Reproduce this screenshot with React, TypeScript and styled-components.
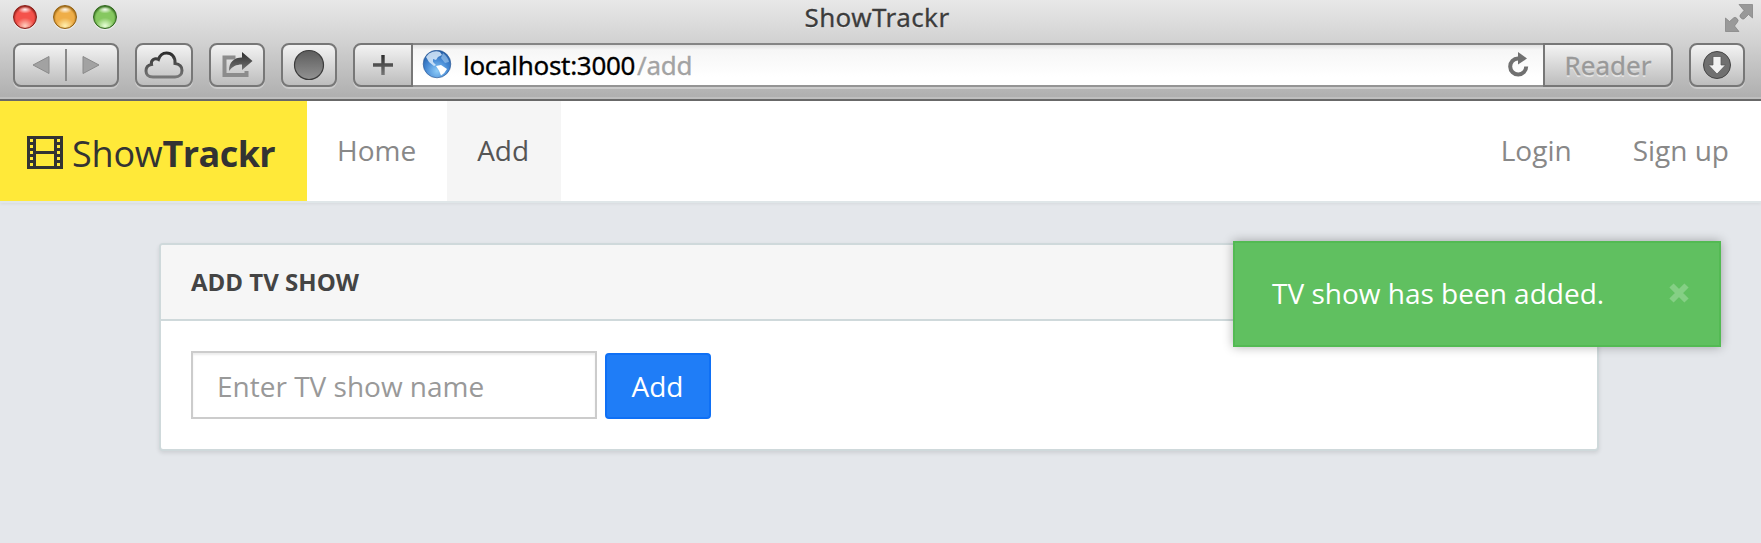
import React from "react";
import styled, { createGlobalStyle } from "styled-components";

const GlobalStyle = createGlobalStyle`
  * { box-sizing: border-box; }
  body { margin: 0; background: #e4e7eb; font-family: "Open Sans", "Noto Sans", sans-serif; font-size: 28px; }
  button, input { font-family: inherit; margin: 0; }
`;

const Window = styled.div`
  position: relative;
  height: 543px;
  overflow: hidden;
  display: flex;
  flex-direction: column;
  background: #e4e7eb;
`;

const Chrome = styled.header`
  height: 101px;
  flex: none;
  background: linear-gradient(#e8e8e8, #d2d2d2 42%, #aeaeae);
  border-bottom: 2px solid #696969;
  box-shadow: inset 0 -2px 0 #bebebe;
`;

const TitleBar = styled.div`
  display: grid;
  grid-template-columns: 1fr auto 1fr;
  height: 43px;
  padding: 0 20px 0 13px;
`;

const Lights = styled.div`
  display: flex;
  gap: 16px;
  padding-top: 5px;
`;

const Light = styled.span<{ $dark: string; $mid: string; $glow: string }>`
  width: 24px;
  height: 24px;
  border-radius: 50%;
  border: 1px solid ${(p) => p.$dark};
  background:
    radial-gradient(ellipse 7px 4px at 50% 16%, rgba(255, 255, 255, 0.9), rgba(255, 255, 255, 0) 100%),
    radial-gradient(ellipse 9px 8px at 50% 90%, ${(p) => p.$glow}, transparent 100%),
    radial-gradient(circle at 50% 55%, ${(p) => p.$mid} 55%, ${(p) => p.$dark} 100%);
  box-shadow: inset 0 1px 2px ${(p) => p.$dark}, 0 1px 0 rgba(255, 255, 255, 0.6);
`;

const WindowTitle = styled.div`
  font: 26px/34px "Noto Sans", sans-serif;
  color: #3c3c3c;
  letter-spacing: 0.4px;
  -webkit-text-stroke: 0.3px #3c3c3c;
  text-shadow: 0 1px 0 #f4f4f4;
`;

const ExpandIcon = styled.svg`
  justify-self: end;
  margin: 4px -12px 0 0;
`;

const Toolbar = styled.div`
  display: flex;
  height: 44px;
  padding: 0 16px 0 13px;
`;

const ToolButton = styled.button<{ $width: number; $gap?: number }>`
  width: ${(p) => p.$width}px;
  margin-right: ${(p) => p.$gap ?? 0}px;
  height: 44px;
  flex: none;
  display: flex;
  align-items: center;
  justify-content: center;
  padding: 0;
  border: 2px solid #777;
  border-radius: 8px;
  background: linear-gradient(#f3f3f3, #bdbdbd);
  box-shadow: 0 2px 0 rgba(255, 255, 255, 0.3);
`;

const NewTab = styled(ToolButton)`
  border-radius: 8px 0 0 8px;
`;

const Reader = styled(ToolButton)`
  border-radius: 0 8px 8px 0;
  font: 26px/34px "Noto Sans", sans-serif;
  color: #999;
  -webkit-text-stroke: 0.3px #999;
  text-shadow: 0 2px 0 #e4e4e4;
`;

const Address = styled.div`
  flex: 1;
  height: 44px;
  display: flex;
  align-items: center;
  padding: 0 14px 0 9px;
  border-top: 2px solid #858585;
  border-bottom: 2px solid #949494;
  background: linear-gradient(#e2e2e2, #f6f6f6 12%, #fff 80%);
  box-shadow: 0 2px 0 rgba(255, 255, 255, 0.3);
`;

const Url = styled.div`
  flex: 1;
  margin-left: 11px;
  font: 26px/36px "Noto Sans", sans-serif;
  letter-spacing: -0.3px;
  color: #000;
  -webkit-text-stroke: 0.3px currentColor;
  span { margin-left: 2px; color: #a3a3a3; }
`;

const Navbar = styled.nav`
  height: 102px;
  flex: none;
  display: flex;
  background: #fff;
  border-bottom: 2px solid #dfe6e8;
  box-shadow: 0 1px 3px rgba(0, 0, 0, 0.06);
`;

const Brand = styled.a`
  width: 307px;
  display: flex;
  align-items: center;
  padding: 4px 0 0 27px;
  background: #ffe939;
  color: #333;
  font-size: 36px;
  letter-spacing: -0.2px;
  white-space: nowrap;
  svg { margin: -2px 8px 0 0; }
  b { letter-spacing: -0.6px; }
`;

const NavLink = styled.a<{ $active?: boolean }>`
  padding: 0 30px;
  line-height: 98px;
  color: ${(p) => (p.$active ? "#555" : "#888")};
  background: ${(p) => (p.$active ? "#f5f5f5" : "transparent")};
`;

const NavLeft = styled.div`
  display: flex;
  ${NavLink} + ${NavLink} { margin-left: 1px; padding-right: 32px; }
`;

const NavRight = styled.div`
  display: flex;
  margin-left: auto;
  padding-right: 2px;
  ${NavLink} + ${NavLink} { margin-left: 1px; }
`;

const Main = styled.main`
  padding: 40px 162px 0 159px;
`;

const Panel = styled.section`
  height: 208px;
  border: 2px solid #cfd9db;
  border-radius: 4px;
  background: #fff;
  box-shadow: 0 2px 4px rgba(0, 0, 0, 0.1);
`;

const PanelHeading = styled.h2`
  margin: 0;
  height: 76px;
  padding: 0 30px;
  border-bottom: 2px solid #cfd9db;
  background: #f6f6f6;
  border-radius: 2px 2px 0 0;
  font-size: 24px;
  font-weight: 700;
  line-height: 74px;
  color: #444;
`;

const Form = styled.form`
  display: flex;
  align-items: flex-end;
  gap: 8px;
  padding: 30px 30px 0;
`;

const TextField = styled.input`
  width: 406px;
  height: 68px;
  padding: 2px 24px 0;
  border: 2px solid #ccc;
  border-radius: 0;
  background: #fff;
  box-shadow: inset 0 2px 2px rgba(0, 0, 0, 0.075);
  font-size: 28px;
  &::placeholder { color: #999; opacity: 1; }
`;

const SubmitButton = styled.button`
  width: 106px;
  height: 66px;
  padding: 0 1px 0 0;
  border: 2px solid #0f70f5;
  border-radius: 4px;
  background: #1f7df7;
  color: #fff;
  font-size: 28px;
`;

const Alert = styled.div`
  position: absolute;
  top: 241px;
  right: 40px;
  width: 488px;
  height: 106px;
  display: flex;
  align-items: center;
  justify-content: space-between;
  padding: 0 30px 3px 37px;
  border: 2px solid #53ba53;
  background: #60c060;
  color: #fff;
  box-shadow: 0 0 10px rgba(0, 0, 0, 0.3);
`;

export default function App() {
  return (
    <Window>
      <GlobalStyle />
      <Chrome>
        <TitleBar>
          <Lights>
            <Light $dark="#8a1c16" $mid="#f4524b" $glow="#ffd0c0" />
            <Light $dark="#94600f" $mid="#efae48" $glow="#fff0b0" />
            <Light $dark="#2f661c" $mid="#86c860" $glow="#e8ffd8" />
          </Lights>
          <WindowTitle>ShowTrackr</WindowTitle>
          <ExpandIcon width="28" height="28" fill="#999" stroke="#808080" strokeWidth="0.7">
            <path d="M14 .5h13.500v13.500l-4-3.500-4 4q-1.500 1.500-3.500-.5t-.5-3.500l3.500-4z" />
            <path d="M.5 14l4 3.500 4-3.500q1.500-1.500 3.500.5t.5 3.500l-3 4 4.500 5.500H.5z" />
          </ExpandIcon>
        </TitleBar>
        <Toolbar>
          <ToolButton $width={106} $gap={16} aria-label="Back and forward">
            <svg width="102" height="40" fill="#a2a2a2" stroke="#8a8a8a">
              <path d="M18 20l16-8.500v17z" />
              <path d="M84 20l-16-8.500v17z" />
              <path d="M51 4v32" strokeWidth="2" />
            </svg>
          </ToolButton>
          <ToolButton $width={58} $gap={16} aria-label="iCloud tabs">
            <svg width="40" height="28" fill="none" strokeWidth="3">
              <defs>
                <linearGradient id="ink" x1="0" y1="0" x2="0" y2="1">
                  <stop offset="0" stopColor="#2c2c2c" />
                  <stop offset="1" stopColor="#777" />
                </linearGradient>
              </defs>
              <path
                stroke="url(#ink)"
                d="M9 26C4 26 2 23 2 20c0-4 2.500-6 5.500-6.500C6.500 9 11 6.500 14.500 8.500 16 4 19 2 22.500 2c5 0 9 4 8.500 10.500 4 .5 7 3 7 7 0 3.500-2.500 6.500-7 6.500z"
              />
            </svg>
          </ToolButton>
          <ToolButton $width={56} $gap={16} aria-label="Share">
            <svg width="34" height="28">
              <path d="M15.500 6.500H4.500v17.500h22V20" fill="none" stroke="#8c8c8c" strokeWidth="4" />
              <path d="M9 20C9 11 14 6.500 22 6.500V1l10.500 9L22 19v-5.500c-6 0-9.500 2-13 6.500z" fill="url(#ink)" />
            </svg>
          </ToolButton>
          <ToolButton $width={56} $gap={16} aria-label="Extension">
            <svg width="32" height="32">
              <defs>
                <linearGradient id="disc" x1="0" y1="0" x2="0" y2="1">
                  <stop offset="0" stopColor="#5c5c5c" />
                  <stop offset="1" stopColor="#929292" />
                </linearGradient>
              </defs>
              <circle cx="16" cy="16" r="14.500" fill="url(#disc)" stroke="#3c3c3c" strokeWidth="1.200" />
            </svg>
          </ToolButton>
          <NewTab $width={60} aria-label="New tab">
            <svg width="22" height="22">
              <path d="M9.300 1h3.400v8.300H21v3.400h-8.300V21H9.300v-8.300H1V9.300h8.300z" fill="url(#ink)" />
            </svg>
          </NewTab>
          <Address>
            <svg width="30" height="30" viewBox="0 0 30 30">
              <defs>
                <radialGradient id="sea" cx=".5" cy=".75" r=".75">
                  <stop offset="0" stopColor="#8ccbf8" />
                  <stop offset=".55" stopColor="#4689d4" />
                  <stop offset="1" stopColor="#1d569f" />
                </radialGradient>
              </defs>
              <circle cx="15" cy="14" r="13.800" fill="url(#sea)" stroke="#315d98" strokeWidth=".7" />
              <path d="M7 3.500q6-3.500 11-1.500l2 3-4 2-2 3-3-1 0 3 3 3-2 1-5-4-3-5z" fill="#d8eafa" opacity=".85" />
              <path d="M14 16l5-1 6 4q-2 4-6 6.500l-2-5z" fill="#fff" />
              <path d="M21 3q5 4 6 9l-4 1-4-5z" fill="#a9cff2" opacity=".6" />
            </svg>
            <Url>localhost:3000<span>/add</span></Url>
            <svg width="22" height="26" viewBox="0 0 22 26" fill="none">
              <path d="M13 6.500h-2a8 8 0 1 0 8.200 8" stroke="#707070" strokeWidth="4" />
              <path d="M11 0l9 6.500-9 6z" fill="#707070" />
            </svg>
          </Address>
          <Reader $width={130} $gap={16}>Reader</Reader>
          <ToolButton $width={56} aria-label="Downloads">
            <svg width="30" height="30">
              <circle cx="15" cy="15" r="13.500" fill="#707070" stroke="#444" />
              <path d="M11 6.500h8V15h4.500L15 24l-8.500-9H11z" fill="#f2f2f2" stroke="#555" strokeWidth=".7" />
            </svg>
          </ToolButton>
        </Toolbar>
      </Chrome>

      <Navbar>
        <Brand>
          <svg width="37" height="33" viewBox="0 0 37 33">
            <path
              fill="#333"
              fillRule="evenodd"
              d="M0 0h36v33H0zM9 3v12h18V3zM9 18v12h18V18zM3 3v3h3V3zM3 9v3h3V9zM3 15v3h3v-3zM3 21v3h3v-3zM3 27v3h3v-3zM30 3v3h3V3zM30 9v3h3V9zM30 15v3h3v-3zM30 21v3h3v-3zM30 27v3h3v-3z"
            />
          </svg>
          Show<b>Trackr</b>
        </Brand>
        <NavLeft>
          <NavLink>Home</NavLink>
          <NavLink $active>Add</NavLink>
        </NavLeft>
        <NavRight>
          <NavLink>Login</NavLink>
          <NavLink>Sign up</NavLink>
        </NavRight>
      </Navbar>

      <Main>
        <Panel>
          <PanelHeading>ADD TV SHOW</PanelHeading>
          <Form>
            <TextField placeholder="Enter TV show name" />
            <SubmitButton type="button">Add</SubmitButton>
          </Form>
        </Panel>
      </Main>

      <Alert role="alert">
        <span>TV show has been added.</span>
        <svg width="20" height="20" stroke="#85cf85" strokeWidth="6">
          <path d="M2.500 2.500l15 15M17.500 2.500l-15 15" />
        </svg>
      </Alert>
    </Window>
  );
}
